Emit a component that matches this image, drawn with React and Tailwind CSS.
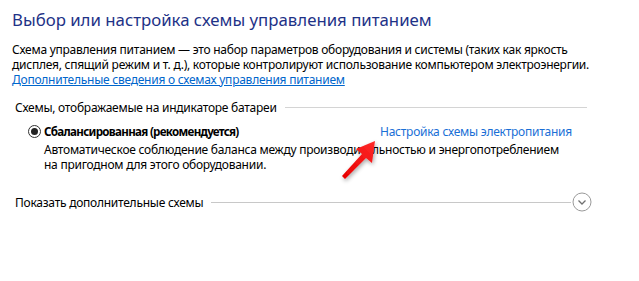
export default function App() {
  return (
    <div
      className="relative w-[639px] h-[281px] bg-white overflow-hidden text-[12px] text-black tracking-[-0.25px]"
      style={{ fontFamily: '"Segoe UI", "Noto Sans", "Open Sans", sans-serif' }}
    >
      <div className="pl-[12px] pt-[8px] w-[600px]">
        <h1 className="text-[16.8px] leading-[24px] text-[#1e3287] tracking-normal whitespace-nowrap">
          Выбор или настройка схемы управления питанием
        </h1>
        <p className="mt-[10px] leading-[15px] whitespace-nowrap">
          Схема управления питанием — это набор параметров оборудования и системы (таких как яркость
          <br />
          дисплея, спящий режим и т. д.), которые контролируют использование компьютером электроэнергии.
          <br />
          <a className="text-[#0066cc] underline">Дополнительные сведения о схемах управления питанием</a>
        </p>

        <div className="mt-[13px] pl-[3px] flex items-center w-[575px]">
          <span className="leading-[15px] whitespace-nowrap">Схемы, отображаемые на индикаторе батареи</span>
          <div className="flex-1 ml-[8px] h-px bg-[#d4d4d4]" />
        </div>

        <div className="mt-[9px] pl-[16px] flex items-center">
          <span className="w-[13px] h-[13px] rounded-full border border-[#333] flex items-center justify-center">
            <span className="w-[7px] h-[7px] rounded-full bg-[#222]" />
          </span>
          <span className="ml-[3px] font-bold text-[11.6px] leading-[15px] w-[336px] tracking-[-0.7px] whitespace-nowrap">
            Сбалансированная (рекомендуется)
          </span>
          <a className="text-[#1a6fd6] leading-[15px] whitespace-nowrap">Настройка схемы электропитания</a>
        </div>
        <p className="mt-[3px] pl-[32px] leading-[15px] whitespace-nowrap">
          Автоматическое соблюдение баланса между производительностью и энергопотреблением
          <br />
          на пригодном для этого оборудовании.
        </p>

        <div className="mt-[20px] pl-[3px] flex items-center w-[580px]">
          <span className="leading-[15px] whitespace-nowrap">Показать дополнительные схемы</span>
          <div className="flex-1 ml-[8px] h-px bg-[#c8c8c8]" />
          <svg width="20" height="20" viewBox="0 0 20 20" className="ml-[1px]">
            <circle cx="10" cy="10" r="9" fill="none" stroke="#9a9a9a" strokeWidth="1" />
            <path d="M6.5 8.5 L10 12 L13.5 8.5" fill="none" stroke="#707070" strokeWidth="1.3" />
          </svg>
        </div>
      </div>

      <svg
        className="absolute left-0 top-0 pointer-events-none"
        width="639"
        height="281"
        viewBox="0 0 639 281"
      >
        <defs>
          <linearGradient id="ar" x1="0" y1="1" x2="1" y2="0">
            <stop offset="0" stopColor="#e60000" />
            <stop offset="1" stopColor="#ff2a2a" />
          </linearGradient>
          <filter id="sh" x="-50%" y="-50%" width="200%" height="200%">
            <feGaussianBlur in="SourceAlpha" stdDeviation="2" />
            <feOffset dx="1" dy="2" />
            <feComponentTransfer>
              <feFuncA type="linear" slope="0.35" />
            </feComponentTransfer>
            <feMerge>
              <feMergeNode />
              <feMergeNode in="SourceGraphic" />
            </feMerge>
          </filter>
        </defs>
        <g filter="url(#sh)">
          <path
            d="M375 141 L372 163 L366 158 L345 179 L342 176 L362 154 L356 149 Z"
            fill="url(#ar)"
          />
        </g>
      </svg>
    </div>
  );
}
